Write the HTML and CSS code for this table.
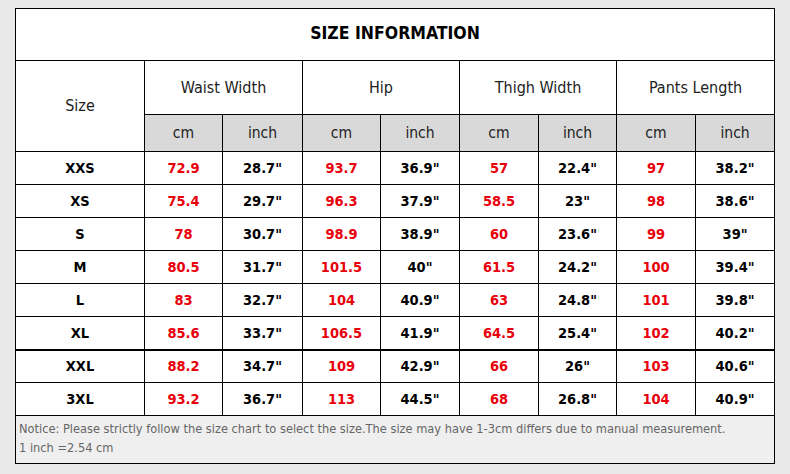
FILE: index.html
```html
<!DOCTYPE html>
<html>
<head>
<meta charset="utf-8">
<link rel="stylesheet" href="styles.css">
</head>
<body>
<div class="sheet">
<table class="chart">
  <colgroup>
    <col class="c-size">
    <col class="c78"><col class="c80">
    <col class="c78"><col class="c79">
    <col class="c79"><col class="c78">
    <col class="c79"><col class="c79">
  </colgroup>
  <tr class="r-title"><th colspan="9" class="title">SIZE INFORMATION</th></tr>
  <tr class="r-head">
    <th rowspan="2" class="lbl">Size</th>
    <th colspan="2" class="lbl">Waist Width</th>
    <th colspan="2" class="lbl">Hip</th>
    <th colspan="2" class="lbl">Thigh Width</th>
    <th colspan="2" class="lbl">Pants Length</th>
  </tr>
  <tr class="r-sub">
    <th class="unit">cm</th><th class="unit">inch</th>
    <th class="unit">cm</th><th class="unit">inch</th>
    <th class="unit">cm</th><th class="unit">inch</th>
    <th class="unit">cm</th><th class="unit">inch</th>
  </tr>
  <tr class="row"><td>XXS</td><td class="r">72.9</td><td>28.7"</td><td class="r">93.7</td><td>36.9"</td><td class="r">57</td><td>22.4"</td><td class="r">97</td><td>38.2"</td></tr>
  <tr class="row"><td>XS</td><td class="r">75.4</td><td>29.7"</td><td class="r">96.3</td><td>37.9"</td><td class="r">58.5</td><td>23"</td><td class="r">98</td><td>38.6"</td></tr>
  <tr class="row"><td>S</td><td class="r">78</td><td>30.7"</td><td class="r">98.9</td><td>38.9"</td><td class="r">60</td><td>23.6"</td><td class="r">99</td><td>39"</td></tr>
  <tr class="row"><td>M</td><td class="r">80.5</td><td>31.7"</td><td class="r">101.5</td><td>40"</td><td class="r">61.5</td><td>24.2"</td><td class="r">100</td><td>39.4"</td></tr>
  <tr class="row"><td>L</td><td class="r">83</td><td>32.7"</td><td class="r">104</td><td>40.9"</td><td class="r">63</td><td>24.8"</td><td class="r">101</td><td>39.8"</td></tr>
  <tr class="row"><td>XL</td><td class="r">85.6</td><td>33.7"</td><td class="r">106.5</td><td>41.9"</td><td class="r">64.5</td><td>25.4"</td><td class="r">102</td><td>40.2"</td></tr>
  <tr class="row thick"><td>XXL</td><td class="r">88.2</td><td>34.7"</td><td class="r">109</td><td>42.9"</td><td class="r">66</td><td>26"</td><td class="r">103</td><td>40.6"</td></tr>
  <tr class="row"><td>3XL</td><td class="r">93.2</td><td>36.7"</td><td class="r">113</td><td>44.5"</td><td class="r">68</td><td>26.8"</td><td class="r">104</td><td>40.9"</td></tr>
  <tr class="r-note"><td colspan="9" class="note">Notice: Please strictly follow the size chart to select the size.The size may have 1-3cm differs due to manual measurement.<br>1 inch =2.54 cm</td></tr>
</table>
</div>
</body>
</html>
```
FILE: styles.css
```css
html, body {
  margin: 0;
  padding: 0;
  background: #e9e9e9;
}
.sheet {
  padding: 8px 0 0 15px;
}
.chart {
  border-collapse: collapse;
  table-layout: fixed;
  width: 760px;
  background: #fff;
  font-family: "DejaVu Sans Condensed", "DejaVu Sans", sans-serif;
  color: #111;
}
.c-size { width: 129px; }
.c78 { width: 78px; }
.c79 { width: 79px; }
.c80 { width: 80px; }
.chart th, .chart td {
  border: 1px solid #000;
  padding: 0;
  text-align: center;
  vertical-align: middle;
}
.r-title { height: 52px; }
.chart th.title {
  font-size: 17.5px;
  font-weight: bold;
  color: #000;
  padding-bottom: 3px;
}
.r-head { height: 54px; }
.chart th.lbl {
  font-weight: normal;
  font-size: 16px;
  color: #222;
  padding-bottom: 1px;
}
.r-sub { height: 37px; }
.unit {
  background: #d9d9d9;
  font-weight: normal;
  font-size: 15.5px;
  color: #222;
}
.row { height: 33px; }
.row td {
  font-size: 14.5px;
  font-weight: bold;
  color: #000;
}
.row td.r { color: #e8000b; }
.row.thick td { border-top: 2px solid #000; }
.r-note { height: 48px; }
.chart td.note {
  background: #efefef;
  text-align: left;
  vertical-align: top;
  padding: 3px 0 0 3px;
  font-size: 12.7px;
  line-height: 19px;
  font-weight: normal;
  color: #666;
}
```
